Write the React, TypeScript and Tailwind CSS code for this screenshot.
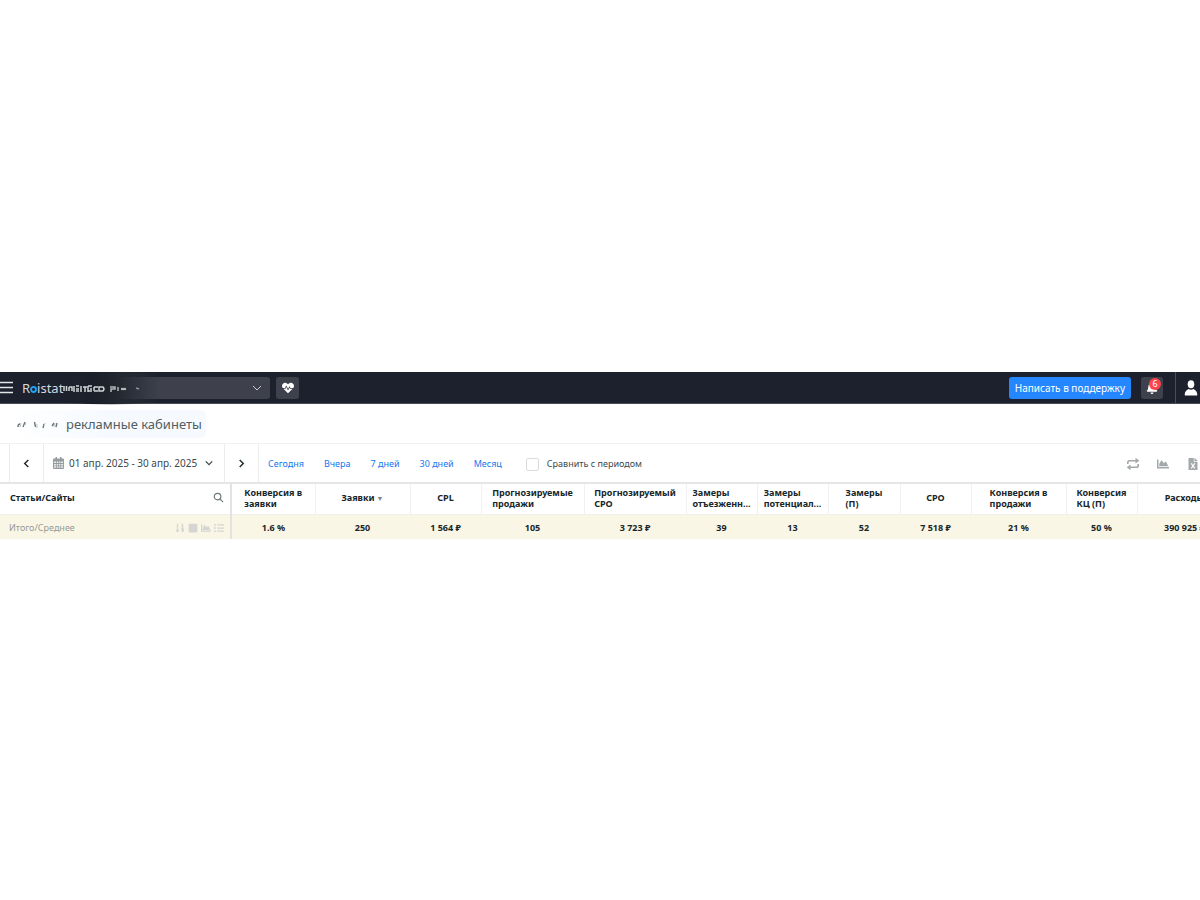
import {
  FaHeartbeat,
  FaBell,
  FaChartArea,
  FaFileExcel,
  FaSortNumericDown,
  FaSquare,
  FaListUl,
} from "react-icons/fa";
import type { ReactNode } from "react";

type Column = { lines: string[]; value: string; width: string; sorted?: boolean };

const columns: Column[] = [
  { lines: ["Конверсия в", "заявки"], value: "1.6 %", width: "w-[84px]" },
  { lines: ["Заявки"], value: "250", width: "w-[95px]", sorted: true },
  { lines: ["CPL"], value: "1 564 ₽", width: "w-[71px]" },
  { lines: ["Прогнозируемые", "продажи"], value: "105", width: "w-[103px]" },
  { lines: ["Прогнозируемый", "CPO"], value: "3 723 ₽", width: "w-[102px]" },
  { lines: ["Замеры", "отъезженн..."], value: "39", width: "w-[71px]" },
  { lines: ["Замеры", "потенциал..."], value: "13", width: "w-[71px]" },
  { lines: ["Замеры", "(П)"], value: "52", width: "w-[72px]" },
  { lines: ["CPO"], value: "7 518 ₽", width: "w-[71px]" },
  { lines: ["Конверсия в", "продажи"], value: "21 %", width: "w-[95px]" },
  { lines: ["Конверсия", "КЦ (П)"], value: "50 %", width: "w-[71px]" },
  { lines: ["Расходы"], value: "390 925 ₽", width: "w-[95px]" },
];

function Chevron({ d, className }: { d: string; className: string }) {
  return (
    <svg viewBox="0 0 10 10" className={className} fill="none" stroke="currentColor" aria-hidden="true">
      <path d={d} />
    </svg>
  );
}

function Logo() {
  return (
    <a href="#" aria-label="Roistat" className="flex items-center text-[13px] leading-4 text-[#d5d8dd]">
      <span>R</span>
      <svg viewBox="0 0 8 8" className="mt-[3px] size-[7px]" fill="none" aria-hidden="true">
        <circle cx="4" cy="4" r="2.8" stroke="#1ea2fa" strokeWidth="2.2" />
      </svg>
      <span>istat</span>
    </a>
  );
}

function HeaderSmudge() {
  return (
    <svg viewBox="0 0 100 34" className="pointer-events-none absolute -top-px left-[60px] h-[34px] w-[100px]" aria-hidden="true">
      <defs>
        <linearGradient id="smudge">
          <stop offset="0" stopColor="#1d212c" stopOpacity="0" />
          <stop offset="0.3" stopColor="#1b1f29" />
          <stop offset="0.55" stopColor="#22262f" />
          <stop offset="1" stopColor="#343842" stopOpacity="0" />
        </linearGradient>
        <filter id="soft">
          <feGaussianBlur stdDeviation="0.35" />
        </filter>
      </defs>
      <path d="M4 2 Q50 0 98 2 V32 Q50 34.500 4 32Z" fill="url(#smudge)" />
      <g fill="none" stroke="#cfd3d6" strokeWidth="1.5" filter="url(#soft)">
        <path d="M4 15v5M6.500 15v5M9 16v4M9 16h3v4M14 15v6M16 15h3M16 18h3M16 20h3M21 15v6M23 16h4M25 16v5M28 15v6M28 15h4M30 18h2M28 20h4M34 16h4M34 20h4M34 16v4M39 16h4q2 2 0 4h-4z" />
        <path d="M50 16h5v2h-4v3M58 16v4" stroke="#b3b7bb" />
        <path d="M61 18h5" stroke="#b3b7bb" strokeWidth="2.2" />
        <path d="M76 17l3 1" stroke="#8b9097" />
      </g>
    </svg>
  );
}

function TopBar() {
  return (
    <header className="relative flex h-8 items-center border-b border-[#494b58] bg-[#1d212d]">
      <button type="button" aria-label="Меню" className="-ml-0.5 pb-0.5 text-[#e4e6e9]">
        <svg viewBox="0 0 16 16" className="size-4" stroke="currentColor" strokeWidth="1.4" aria-hidden="true">
          <path d="M0 3.500h15M0 8.500h15M0 13.500h15" />
        </svg>
      </button>
      <div className="ml-2 w-[42px]">
        <Logo />
      </div>
      <button
        type="button"
        aria-label="Выбор проекта"
        className="ml-1.5 flex h-[22px] w-[200px] items-center justify-end rounded-[3px] bg-linear-to-r from-[#1d212d] to-[#3e414b] to-45% pr-2 text-[#c9ccd1]"
      >
        <Chevron d="M1 3l4 4 4-4" className="size-[10px]" />
      </button>
      <HeaderSmudge />
      <button type="button" aria-label="Состояние" className="ml-1.5 flex h-[22px] w-[23px] items-center justify-center rounded-[3px] bg-[#3e414b] text-white">
        <FaHeartbeat className="size-3" />
      </button>
      <button type="button" className="ml-auto h-[22px] rounded-[3px] bg-[#2487ff] px-1.5 text-[10px] leading-4 text-white">
        Написать в поддержку
      </button>
      <button type="button" aria-label="Уведомления: 6" className="relative ml-2.5 flex h-[22px] w-[22px] items-center justify-center rounded-[3px] bg-[#3e414b] text-white">
        <FaBell className="size-3" />
        <span className="absolute top-px right-0.5 flex size-3 items-center justify-center rounded-full bg-[#fb444c] text-[9px] leading-3">6</span>
      </button>
      <button type="button" aria-label="Профиль" className="ml-3 flex h-full w-[25px] items-center justify-center border-l border-[#4a4d57] pl-1.5 text-white">
        <svg viewBox="0 0 14 16" className="h-4 w-[14px]" fill="currentColor" aria-hidden="true">
          <ellipse cx="7" cy="4.300" rx="3.300" ry="4" />
          <path d="M0.800 15.500Q0.200 11 4.500 9Q7 10.500 9.500 9Q13.800 11 13.200 15.500Z" />
        </svg>
      </button>
    </header>
  );
}

function PageTitle() {
  return (
    <div className="flex h-10 items-center border-b border-[#f2f2f2] pl-[10px]">
      <div className="flex h-7 items-center rounded-md bg-linear-to-r from-white to-[#f6faff] to-50% pr-1 pl-1.5">
        <svg viewBox="0 0 50 12" className="h-3 w-[50px]" fill="none" aria-hidden="true">
          <path d="M2 9q0-3 2-3M9 4l-2 5M18.500 4l1 5M28 6l-1 4M36 8l2-3M41 5l-1 4" stroke="#6d7776" strokeWidth="1.400" />
          <path d="M5 5l-1 4M10 5l-1 2M21 6v4M29 5l-1 3M39 5l-1 4" stroke="#b9c0c0" />
        </svg>
        <h1 className="text-[13px] leading-5 text-[#525e60]">рекламные кабинеты</h1>
      </div>
    </div>
  );
}

function CalendarIcon() {
  return (
    <svg viewBox="0 0 11 12" className="mr-[5px] h-3 w-[11px]" aria-hidden="true">
      <path d="M0 2.500Q0 1.500 1 1.500H10Q11 1.500 11 2.500V11Q11 12 10 12H1Q0 12 0 11Z" fill="#949c9d" />
      <path d="M2.500 0h1.500v3H2.500zM7 0h1.500v3H7z" fill="#949c9d" />
      <path d="M1 4.500h2v1.500H1zM3.700 4.500h1.500v1.500H3.700zM5.900 4.500h1.500v1.500H5.900zM8.100 4.500h2v1.500h-2zM1 6.900h2v1.500H1zM3.700 6.900h1.500v1.500H3.700zM5.900 6.900h1.500v1.500H5.900zM8.100 6.900h2v1.500h-2zM1 9.300h2v1.500H1zM3.700 9.300h1.500v1.500H3.700zM5.900 9.300h1.500v1.500H5.900zM8.100 9.300h2v1.500h-2z" fill="#e8eaea" />
    </svg>
  );
}

function ToolButton({ label, children }: { label: string; children: ReactNode }) {
  return (
    <button type="button" aria-label={label} className="flex w-3.5 justify-center">
      {children}
    </button>
  );
}

function Toolbar() {
  return (
    <div className="flex h-[38px] items-stretch pl-[9px] text-[9px] text-[#3d484b]">
      <button type="button" aria-label="Предыдущий период" className="flex w-[34px] items-center justify-center border-l border-[#ececec] text-[#1e2a2d]">
        <Chevron d="M7 1L3 5l4 4" className="size-[9px] stroke-[1.6]" />
      </button>
      <button type="button" className="flex w-[182px] items-center border-x border-[#ececec] pl-[9px] text-[10px]">
        <CalendarIcon />
        01 апр. 2025 - 30 апр. 2025
        <Chevron d="M1 3l4 4 4-4" className="ml-2 size-2 stroke-[1.6]" />
      </button>
      <button type="button" aria-label="Следующий период" className="flex w-[34px] items-center justify-center border-r border-[#ececec] text-[#1e2a2d]">
        <Chevron d="M3 1l4 4-4 4" className="size-[9px] stroke-[1.6]" />
      </button>
      <nav className="ml-[9px] flex items-center gap-5 pt-0.5 text-[#1478f0]">
        <a href="#">Сегодня</a>
        <a href="#">Вчера</a>
        <a href="#">7 дней</a>
        <a href="#">30 дней</a>
        <a href="#">Месяц</a>
      </nav>
      <label className="ml-6 flex items-center gap-2 pt-0.5">
        <input type="checkbox" className="size-[13px] appearance-none rounded-[2px] border border-[#d9dcdd] bg-white" />
        Сравнить с периодом
      </label>
      <div className="ml-auto flex items-center gap-4 pt-0.5 text-[#a3a9aa]">
        <ToolButton label="Обновить">
          <svg viewBox="0 0 14 14" className="size-3.5" fill="none" stroke="currentColor" strokeWidth="1.600" aria-hidden="true">
            <path d="M1.800 7V5.500Q1.800 3.700 3.600 3.700H10.500M12.200 7V8.500Q12.200 10.300 10.400 10.300H3.500" />
            <path d="M9.500 0.800l3.800 2.900-3.800 2.900zM4.500 7.400L0.700 10.300l3.800 2.900z" fill="currentColor" stroke="none" />
          </svg>
        </ToolButton>
        <ToolButton label="График"><FaChartArea className="size-3" /></ToolButton>
        <ToolButton label="Скачать Excel"><FaFileExcel className="size-3" /></ToolButton>
      </div>
    </div>
  );
}

function ReportTable() {
  return (
    <div className="overflow-hidden border-t-2 border-[#e6e6e6]">
      <table className="w-[1232px] table-fixed border-collapse text-[9px] leading-[11px] text-[#17262a]">
        <colgroup>
          <col className="w-[231px]" />
          {columns.map((c, i) => (
            <col key={i} className={c.width} />
          ))}
        </colgroup>
        <thead>
          <tr className="h-[30px] border-b border-[#f0f0ee]">
            <th scope="col" className="border-r-2 border-[#e2e2e2] p-0 pr-1.5 pb-0.5 pl-[10px]">
              <div className="flex items-center justify-between">
                Статьи/Сайты
                <button type="button" aria-label="Поиск">
                  <svg viewBox="0 0 12 12" className="size-[11px]" fill="none" stroke="#6f7879" strokeWidth="1.300" aria-hidden="true">
                    <circle cx="5" cy="5" r="3.600" />
                    <path d="M7.800 7.800L11 11" />
                  </svg>
                </button>
              </div>
            </th>
            {columns.map((c, i) => (
              <th key={i} scope="col" className="border-r border-[#f0f0f0] p-0 pb-0.5 whitespace-nowrap">
                <div className="flex justify-center text-left">
                  <div>
                    {c.lines.map((line) => (
                      <div key={line}>
                        {line}
                        {c.sorted && <span className="ml-0.5 text-[7px] text-[#7d8687]">▼</span>}
                      </div>
                    ))}
                  </div>
                </div>
              </th>
            ))}
          </tr>
        </thead>
        <tbody>
          <tr className="h-[25px] bg-[#faf6e6] text-center font-bold">
            <td className="border-r-2 border-[#e2e2df] p-0 pt-0.5 pr-1.5 pl-[9px] font-normal text-[#969b97]">
              <div className="flex items-center justify-between">
                Итого/Среднее
                <span className="flex items-center gap-[3px] text-[#d5d6d4]">
                  <FaSortNumericDown className="size-[10px]" />
                  <FaSquare className="size-[10px]" />
                  <FaChartArea className="size-[10px]" />
                  <FaListUl className="size-[10px]" />
                </span>
              </div>
            </td>
            {columns.map((c, i) => (
              <td key={i} className="p-0 pt-0.5 whitespace-nowrap">{c.value}</td>
            ))}
          </tr>
        </tbody>
      </table>
    </div>
  );
}

export default function App() {
  return (
    <div className="min-h-screen overflow-hidden bg-white pt-[372px] font-['Noto_Sans',sans-serif]">
      <TopBar />
      <main>
        <PageTitle />
        <Toolbar />
        <ReportTable />
      </main>
    </div>
  );
}
